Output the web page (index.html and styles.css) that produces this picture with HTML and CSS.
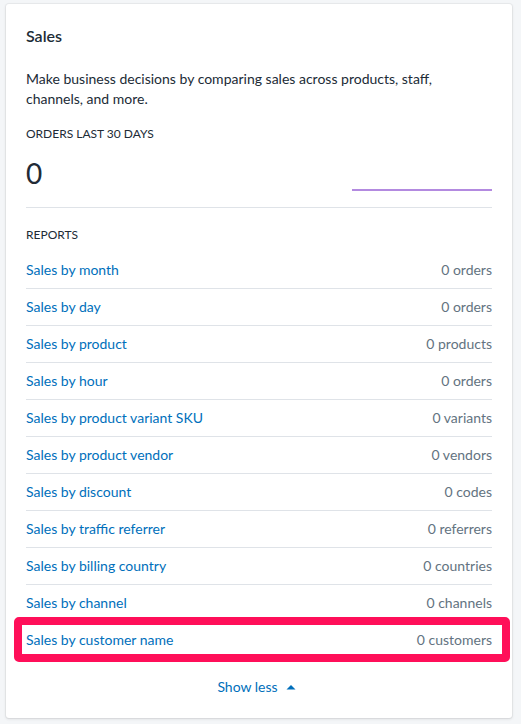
FILE: index.html
```html
<!DOCTYPE html>
<html lang="en">
<head>
<meta charset="utf-8">
<title>Sales</title>
<link rel="stylesheet" href="styles.css">
</head>
<body>
<div class="card">
  <div class="content">
    <h2 class="title">Sales</h2>
    <p class="desc">Make business decisions by comparing sales across products, staff, channels, and more.</p>
    <div class="label">Orders last 30 days</div>
    <div class="metric-row">
      <span class="value">0</span>
      <span class="spark"></span>
    </div>
    <div class="reports">
      <div class="label label-reports">Reports</div>
      <ul class="report-list">
        <li class="row"><a href="#">Sales by month</a><span class="count">0 orders</span></li>
        <li class="row"><a href="#">Sales by day</a><span class="count">0 orders</span></li>
        <li class="row"><a href="#">Sales by product</a><span class="count">0 products</span></li>
        <li class="row"><a href="#">Sales by hour</a><span class="count">0 orders</span></li>
        <li class="row"><a href="#">Sales by product variant SKU</a><span class="count">0 variants</span></li>
        <li class="row"><a href="#">Sales by product vendor</a><span class="count">0 vendors</span></li>
        <li class="row"><a href="#">Sales by discount</a><span class="count">0 codes</span></li>
        <li class="row"><a href="#">Sales by traffic referrer</a><span class="count">0 referrers</span></li>
        <li class="row"><a href="#">Sales by billing country</a><span class="count">0 countries</span></li>
        <li class="row"><a href="#">Sales by channel</a><span class="count">0 channels</span></li>
        <li class="row row-highlight"><a href="#">Sales by customer name</a><span class="count">0 customers</span></li>
      </ul>
    </div>
  </div>
  <div class="footer">
    <button class="toggle" type="button">Show less
      <svg class="caret" viewBox="0 0 20 20" width="20" height="20" aria-hidden="true"><path d="M5.5 12.5L10 8l4.5 4.5z" fill="currentColor"/></svg>
    </button>
  </div>
</div>
</body>
</html>
```
FILE: styles.css
```css
* { box-sizing: border-box; }

body {
  margin: 0;
  padding: 4px 9px 6px 6px;
  background: #f4f6f8;
  font-family: "Lato", "Open Sans", "Liberation Sans", sans-serif;
  font-size: 14px;
  line-height: 20px;
  color: #212b36;
}

.card {
  background: #fff;
  border-radius: 3px;
  box-shadow: 0 0 0 1px rgba(63, 63, 68, 0.05), 0 1px 3px 0 rgba(63, 63, 68, 0.15);
}

.content {
  padding: 20px 20px 0;
}

.title {
  margin: 0 0 21px;
  font-size: 16px;
  line-height: 24px;
  font-weight: 600;
}

.desc {
  margin: 0 0 17px;
}

.label {
  font-size: 12px;
  line-height: 16px;
  text-transform: uppercase;
  font-weight: 400;
}

.metric-row {
  display: flex;
  justify-content: space-between;
  align-items: flex-end;
  margin-top: 15px;
  padding-bottom: 16px;
  border-bottom: 1px solid #dfe3e8;
}

.value {
  font-size: 28px;
  line-height: 32px;
  margin-bottom: 2px;
}

.spark {
  width: 140px;
  height: 2px;
  background: #b38ae0;
}

.reports {
  padding-top: 19px;
}

.label-reports {
  margin-bottom: 9px;
}

.report-list {
  list-style: none;
  margin: 0;
  padding: 0;
}

.row {
  display: flex;
  justify-content: space-between;
  padding: 8px 0;
  border-bottom: 1px solid #dfe3e8;
}

.row:last-child {
  border-bottom: none;
}

.row a {
  color: #006fbb;
  text-decoration: none;
}

.count {
  color: #637381;
}

.row-highlight {
  position: relative;
}

.row-highlight::after {
  content: "";
  position: absolute;
  top: -5px;
  bottom: -4px;
  left: -12px;
  right: -18px;
  border: 8px solid #ff0f59;
  border-radius: 5px;
  pointer-events: none;
}

.footer {
  display: flex;
  justify-content: center;
  padding: 19px 0 21px;
}

.toggle {
  display: flex;
  align-items: center;
  gap: 3px;
  padding: 0;
  border: 0;
  background: none;
  font: inherit;
  color: #006fbb;
  cursor: pointer;
}

.caret {
  display: block;
}
```
